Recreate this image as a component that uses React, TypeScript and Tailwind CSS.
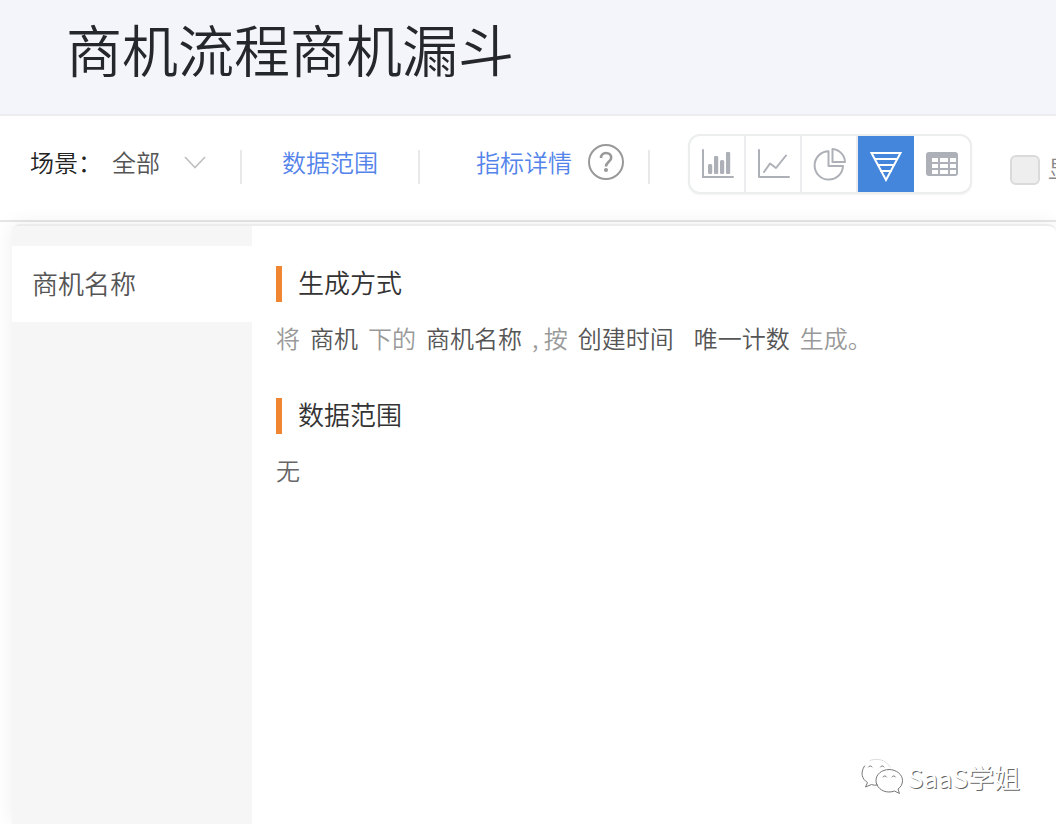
import React, { useState } from "react";

const BarIcon = () => (
  <svg width="34" height="32" viewBox="0 0 34 32" fill="none">
    <path d="M2 2v27h30" stroke="#adb0b6" strokeWidth="2" strokeLinecap="round" />
    <g fill="#adb0b6">
      <rect x="7" y="16" width="4.200" height="10" rx="1.500" />
      <rect x="13" y="8" width="4.200" height="18" rx="1" />
      <rect x="19" y="12" width="4.200" height="14" rx="1.500" />
      <rect x="25" y="4" width="4.200" height="22" rx="1" />
    </g>
  </svg>
);

const LineIcon = () => (
  <svg width="34" height="32" viewBox="0 0 34 32" fill="none">
    <path
      d="M2 2v27h30M7 24l6-8.500 6 4.500L29 7.500"
      stroke="#adb0b6"
      strokeWidth="2"
      strokeLinecap="round"
      strokeLinejoin="round"
    />
  </svg>
);

const PieIcon = () => (
  <svg width="34" height="34" viewBox="0 0 34 34" fill="none">
    <path
      d="M15.500 4.200A14.200 14.200 0 1 0 30 19H15.500Z"
      stroke="#adb0b6"
      strokeWidth="2"
      strokeLinejoin="round"
    />
    <path
      d="M19.500 2v13H32A13.500 13.500 0 0 0 19.500 2Z"
      stroke="#adb0b6"
      strokeWidth="2"
      strokeLinejoin="round"
    />
  </svg>
);

const FunnelIcon = () => (
  <svg width="34" height="36" viewBox="0 0 34 36" fill="none">
    <path
      d="M2.500 7h29L17 34ZM5 13h24M8 19h18M11 25h12"
      stroke="white"
      strokeWidth="2"
    />
  </svg>
);

const TableIcon = () => (
  <svg width="32" height="24" viewBox="0 0 32 24">
    <rect width="32" height="24" rx="3" fill="#adb0b6" />
    <path
      d="M6 6h6v4H6zM14 6h8v4h-8zM24 6h6v4h-6zM6 12h6v4H6zM14 12h8v4h-8zM24 12h6v4h-6zM6 18h6v4H6zM14 18h8v4h-8zM24 18h6v4h-6z"
      fill="white"
    />
  </svg>
);

const WechatIcon = () => (
  <svg width="44" height="38" viewBox="0 0 44 38" fill="none">
    <g stroke="#777777" strokeWidth="1" strokeLinecap="round">
      <path d="M4.500 8C0 15 2 21 7.500 24.500L5.500 29l6-2.500c2 .8 4 .8 6 .5" />
      <path d="M10 2.500C16 0 26 1 30 9" stroke="#dddddd" />
      <path d="M8.500 9a2 2 0 0 1 3.500 0M20.500 9a2 2 0 0 1 3.500 0" />
      <path d="M29 11.500c-7.500 0-13 5-13 11S21.500 34 29 34c2 0 4-.4 5.500-1l5 2.500-1.500-4.500c3-2 4.500-5 4.500-8.500 0-6-6-11-13.500-11Z" />
      <path d="M23 19a2 2 0 0 1 3.500 0M32 19a2 2 0 0 1 3.500 0" />
    </g>
  </svg>
);

const chartTypes = [
  { id: "bar", label: "柱状图", icon: <BarIcon /> },
  { id: "line", label: "折线图", icon: <LineIcon /> },
  { id: "pie", label: "饼图", icon: <PieIcon /> },
  { id: "funnel", label: "漏斗图", icon: <FunnelIcon /> },
  { id: "table", label: "表格", icon: <TableIcon /> },
];

const Divider = () => (
  <span className="mb-1.5 h-[34px] w-0.5 shrink-0 self-end bg-[#e9e9e9]" />
);

const SectionTitle: React.FC<{ text: string }> = ({ text }) => (
  <div className="flex h-9 items-start gap-4">
    <span className="h-9 w-1.5 bg-[#f08532]" />
    <h2 className="text-[26px] leading-8 text-[#333333]">{text}</h2>
  </div>
);

const Toolbar: React.FC = () => {
  const [chart, setChart] = useState("funnel");

  return (
    <div className="flex items-start overflow-hidden border-b-2 border-[#e6e6e6] pt-[18px] pb-3.5 pl-[30px] text-2xl whitespace-nowrap">
      <div className="flex h-14 shrink-0 items-center">
        <label htmlFor="scene" className="w-[82px] text-[#222222]">
          场景：
        </label>
        <div className="relative mr-8 w-24">
          <select
            id="scene"
            className="h-9 w-full appearance-none bg-transparent leading-9 text-[#555555] outline-none"
          >
            <option>全部</option>
          </select>
          <svg
            className="pointer-events-none absolute top-3 right-0.5"
            width="22"
            height="13"
            viewBox="0 0 22 13"
            fill="none"
          >
            <path d="M1 1l10 10.500L21 1" stroke="#bfbfbf" strokeWidth="1.600" />
          </svg>
        </div>
        <Divider />
        <a href="#range" className="mx-10 text-[#5484ea]">
          数据范围
        </a>
        <Divider />
        <a href="#metrics" className="mr-4 ml-14 text-[#5484ea]">
          指标详情
        </a>
        <button type="button" aria-label="帮助" className="mr-6">
          <svg width="36" height="36" viewBox="0 0 36 36" fill="none">
            <circle cx="18" cy="18" r="17" stroke="#999999" strokeWidth="2" />
            <path
              d="M13 14c0-3 2-5 5-5s5.200 2 5.200 4.700c0 4-5.200 4.300-5.200 8.800"
              stroke="#999999"
              strokeWidth="2.600"
            />
            <circle cx="18" cy="26" r="2" fill="#999999" />
          </svg>
        </button>
        <Divider />
      </div>
      <div className="ml-[38px] flex shrink-0 overflow-hidden rounded-xl border-2 border-[#eceded] bg-white shadow-xs">
        {chartTypes.map((item) => (
          <button
            key={item.id}
            type="button"
            aria-label={item.label}
            onClick={() => setChart(item.id)}
            className={`flex h-14 w-14 items-center justify-center border-r-2 pl-0.5 last:border-r-0 last:pl-0 ${
              chart === item.id
                ? "border-[#4586dd] bg-[#4586dd]"
                : "border-[#ececee]"
            }`}
          >
            {item.icon}
          </button>
        ))}
      </div>
      <label className="ml-[38px] flex h-[72px] shrink-0 items-center gap-2 text-[#888888]">
        <input
          type="checkbox"
          className="h-[30px] w-[30px] appearance-none rounded-md border-2 border-[#dadada] bg-[#eeeeee]"
        />
        <span className="pb-1">显示</span>
      </label>
    </div>
  );
};

const App: React.FC = () => {
  return (
    <div className="relative flex min-h-screen flex-col overflow-hidden bg-white font-['Noto_Sans_CJK_SC',sans-serif] font-[350]">
      <header className="border-b-2 border-[#ececee] bg-[#f4f5fa] px-[66px] pt-2 pb-[26px]">
        <h1 className="text-[56px] leading-[80px] text-[#24272c]">
          商机流程商机漏斗
        </h1>
      </header>
      <Toolbar />
      <main className="mt-0.5 ml-3 flex grow rounded-t-lg border-t-2 border-[#ececec] bg-white shadow-[0_0_20px_rgba(0,0,0,0.07)]">
        <aside className="w-60 shrink-0 bg-[#f6f6f6] pt-5">
          <button
            type="button"
            className="h-[76px] w-full bg-white pb-1 pl-5 text-left text-[26px] text-[#555555]"
          >
            商机名称
          </button>
        </aside>
        <section className="grow px-6 pt-10">
          <SectionTitle text="生成方式" />
          <p className="mt-[18px] flex flex-wrap gap-x-2.5 text-2xl leading-9 text-[#999999]">
            <span>将</span>
            <span className="text-[#555555]">商机</span>
            <span>下的</span>
            <span className="text-[#555555]">商机名称</span>
            <span>, 按</span>
            <span className="mr-2.5 text-[#555555]">创建时间</span>
            <span className="text-[#555555]">唯一计数</span>
            <span>生成。</span>
          </p>
          <div className="mt-[42px]">
            <SectionTitle text="数据范围" />
            <p className="mt-[18px] text-2xl leading-9 text-[#666666]">无</p>
          </div>
        </section>
      </main>
      <div className="absolute right-9 bottom-7 flex items-center gap-1 text-[26px] leading-9 font-normal text-white [text-shadow:1px_1px_0_#666666]">
        <WechatIcon />
        <span>SaaS学姐</span>
      </div>
    </div>
  );
};

export default App;
